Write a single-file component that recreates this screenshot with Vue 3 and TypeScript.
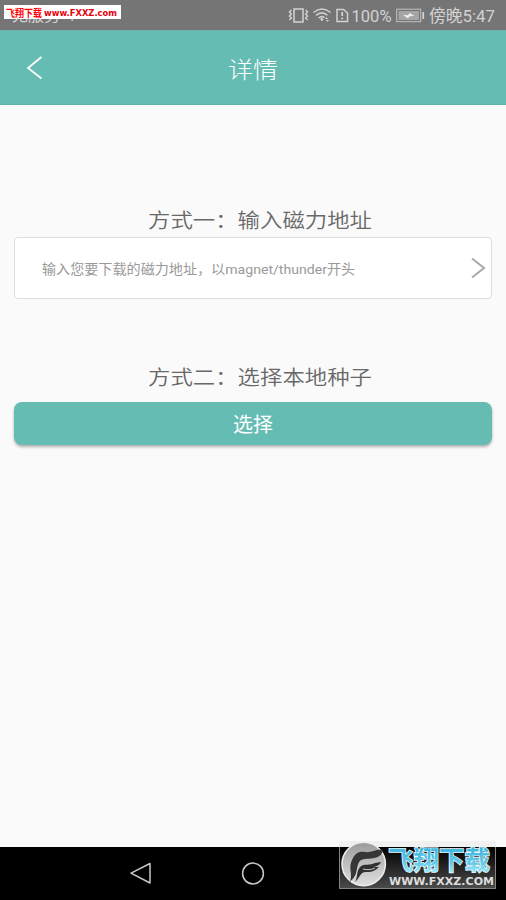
<script setup lang="ts">
import { ref } from 'vue'

const address = ref<string>('')
const time = '傍晚5:47'
</script>

<template>
  <div class="screen">
    <header class="status">
      <span class="carrier">无服务</span>
      <span class="carrier-mark">!</span>
      <div class="site-tag">
        <svg width="117" height="14" viewBox="0 0 117 14">
          <text class="tag-cn" x="2" y="11.500" textLength="36" lengthAdjust="spacingAndGlyphs">飞翔下载</text>
          <text class="tag-url" x="40" y="11" textLength="73" lengthAdjust="spacingAndGlyphs">www.FXXZ.com</text>
        </svg>
      </div>
      <svg class="status-icons" width="218" height="30" viewBox="0 0 218 30">
        <g fill="none" stroke="#d2d2d2" stroke-width="1.5">
          <rect x="6" y="9" width="9" height="13" />
          <path d="M3.400 10l-2 2 2 2-2 2 2 2-2 2M17.600 10l2 2-2 2 2 2-2 2 2 2" stroke-width="1.400" />
          <path d="M25.500 12.500Q34 5.500 42.500 12.500M28 15.300Q34 10.500 39.500 15.300M30.500 18Q34 15.500 36.500 17.500" />
          <path d="M49 9.500h6.500l4 3.500v8.500h-10.500z" />
          <path d="M54.200 12v4M54.200 17.500v1.700" stroke-width="1.800" />
          <rect x="108.700" y="9.200" width="24" height="12.500" stroke="#c4c4c4" stroke-width="1" />
        </g>
        <path d="M32 19l2-1.500 1.500 2-1.500 1.800zM37 19l1.500-2 1.500 2zM38 20h3l-1.500 2z" fill="#d2d2d2" />
        <rect x="110.500" y="11" width="20.500" height="9" fill="#a5a5a5" />
        <path d="M115 15l5 .2 1.500-2.200 5 3-5 .2-1.500 2.300z" fill="#eee" />
        <path d="M135.200 12v7" stroke="#d0d0d0" stroke-width="1.800" />
        <text class="status-text" x="63.500" y="21.500" textLength="40" lengthAdjust="spacingAndGlyphs">100%</text>
        <text class="status-text" x="141" y="21.500" textLength="66" lengthAdjust="spacingAndGlyphs">{{ time }}</text>
      </svg>
    </header>

    <nav class="bar">
      <button class="back" aria-label="返回">
        <svg width="18" height="24" viewBox="0 0 18 24"><path d="M15.500 1L2 12 15.500 22.500" /></svg>
      </button>
      <h1>详情</h1>
    </nav>

    <main>
      <h2>方式一：输入磁力地址</h2>
      <label class="field">
        <input v-model="address" type="text" placeholder="输入您要下载的磁力地址，以magnet/thunder开头" />
        <svg width="16" height="22" viewBox="0 0 16 22"><path d="M2 1.500L14 11 2 20.500" /></svg>
      </label>
      <h2 class="second">方式二：选择本地种子</h2>
      <button class="pick">选择</button>
    </main>

    <footer>
      <svg class="keys" width="270" height="53" viewBox="0 0 270 53">
        <g fill="none" stroke="#c8c8c8" stroke-width="1.500" stroke-linejoin="round">
          <path d="M150 16.500v19.500l-19-9.800z" />
          <circle cx="253" cy="26.500" r="10.400" />
        </g>
      </svg>
    </footer>

    <svg class="watermark" width="167" height="59" viewBox="0 0 167 59">
      <defs>
        <linearGradient id="plate" x2="0" y2="1">
          <stop offset="0" stop-color="#000" />
          <stop offset="1" stop-color="#4c4c4c" />
        </linearGradient>
        <linearGradient id="disc" x2="0" y2="1">
          <stop offset="0" stop-color="#9a9a9a" />
          <stop offset=".4" stop-color="#b9b9b9" />
          <stop offset="1" stop-color="#dedede" />
        </linearGradient>
        <linearGradient id="sky" gradientUnits="userSpaceOnUse" x1="0" y1="6" x2="0" y2="32">
          <stop offset="0" stop-color="#3fb4de" />
          <stop offset=".6" stop-color="#62c9e9" />
          <stop offset="1" stop-color="#a0eafa" />
        </linearGradient>
      </defs>
      <rect width="157" height="7" fill="#f0f0f0" />
      <rect y="6" width="157" height="42" fill="url(#plate)" />
      <path d="M.5 6v41.500h156V6" fill="none" stroke="#858585" />
      <circle cx="24.700" cy="23" r="21.700" fill="url(#disc)" stroke="#eee" stroke-width="1.500" />
      <path d="M11 40.500C14 33 9 27 13 19c3-7 7-9 13-8 7 1 10-3 18-2-1 6-6 8-12 8.500-7 .5-11 0-13 6-2 6-1 12-8 17z" fill="#363636" />
      <path d="M16 41c3-5 1-10 5-15 4-4 10-1 15-4l6-1c-1 3-4 4-7 5l5 0c-4 4-7 5-12 5-7-1-7 6-12 10z" fill="#303030" />
      <path d="M24 28c4 1 8 1 12-1" fill="none" stroke="#c4c4c4" stroke-width="1" />
      <text class="wm-cn" x="49" y="28.500" textLength="102" lengthAdjust="spacingAndGlyphs">飞翔下载</text>
      <text class="wm-url" x="50" y="43.500" textLength="105" lengthAdjust="spacingAndGlyphs">WWW.FXXZ.COM</text>
    </svg>
  </div>
</template>

<style>
body {
  margin: 0;
}
</style>

<style scoped>
.screen {
  position: relative;
  display: flex;
  flex-direction: column;
  width: 506px;
  height: 900px;
  overflow: hidden;
  background: #fafafa;
  font-family: Roboto, "Noto Sans CJK SC", sans-serif;
}
.status {
  position: relative;
  display: flex;
  flex: none;
  height: 30px;
  background: #757575;
  color: #d2d2d2;
}
.carrier {
  padding: 5px 0 0 12px;
  font-size: 16px;
  line-height: 22px;
}
.carrier-mark {
  padding: 6px 0 0 10px;
  font-size: 16px;
  line-height: 20px;
}
.site-tag {
  position: absolute;
  left: 4px;
  top: 5px;
  height: 14px;
  background: #fff;
}
.site-tag svg,
.keys {
  display: block;
}
.tag-cn {
  font: bold 10px "Noto Sans CJK SC", sans-serif;
  fill: #f00;
}
.tag-url {
  font: bold 9.5px "DejaVu Sans", sans-serif;
  fill: #e8000c;
}
.status-icons {
  margin-left: auto;
}
.status-text {
  font-size: 16.5px;
  fill: #d2d2d2;
}
.bar {
  display: grid;
  grid-template-columns: 70px 1fr 70px;
  align-items: center;
  flex: none;
  box-sizing: border-box;
  height: 75px;
  background: #65bcb3;
  border-top: 1px solid #6fb0aa;
  border-bottom: 1px solid #5fb0a8;
}
button {
  padding: 0;
  border: 0;
  font-family: inherit;
}
.back {
  height: 24px;
  margin-left: 26px;
  background: none;
  text-align: left;
}
.back svg {
  display: block;
}
.back path {
  fill: none;
  stroke: #fff;
  stroke-width: 1.7;
}
h1 {
  margin: 0;
  color: #fff;
  font-size: 25px;
  font-weight: 300;
  font-family: "Noto Sans CJK SC", sans-serif;
  line-height: 36px;
  text-align: center;
  transform: scaleY(0.92);
}
main {
  display: flex;
  flex: 1;
  flex-direction: column;
  padding: 97px 14px 0;
}
h2 {
  margin: 0 0 1px;
  padding-left: 14px;
  color: #686868;
  font-size: 22.4px;
  font-weight: 350;
  font-family: "Noto Sans CJK SC", sans-serif;
  line-height: 34px;
  text-align: center;
  transform: scaleY(0.91);
}
.field {
  display: flex;
  align-items: center;
  box-sizing: border-box;
  height: 62px;
  padding: 0 5px 0 27px;
  border: 1px solid #dedede;
  border-radius: 4px;
  background: #fff;
}
input {
  flex: 1;
  min-width: 0;
  height: 30px;
  padding: 2px 0 0;
  border: 0;
  outline: 0;
  background: none;
  font: 400 14.1px/28px Roboto, "Noto Sans CJK SC", sans-serif;
  transform: scaleY(0.93);
}
input::placeholder {
  color: #999;
  line-height: 28px;
  opacity: 1;
}
.field path {
  fill: none;
  stroke: #a8a8a8;
  stroke-width: 2;
}
.second {
  margin-top: 60px;
}
.pick {
  height: 43px;
  margin-top: 8px;
  border-radius: 8px;
  background: #65bcb3;
  box-shadow: 0 2px 3px rgba(0, 0, 0, 0.3);
  color: #fff;
  font-size: 20px;
  font-weight: 400;
}
footer {
  flex: none;
  height: 53px;
  background: #000;
}
.watermark {
  position: absolute;
  left: 339px;
  top: 841px;
}
.wm-cn {
  font: 700 26px "Noto Sans CJK SC", sans-serif;
  fill: url(#sky);
  stroke: #f4fcff;
  stroke-width: 1.5;
  paint-order: stroke;
}
.wm-url {
  font: bold 11px "DejaVu Sans", sans-serif;
  fill: #ddd;
}
</style>
